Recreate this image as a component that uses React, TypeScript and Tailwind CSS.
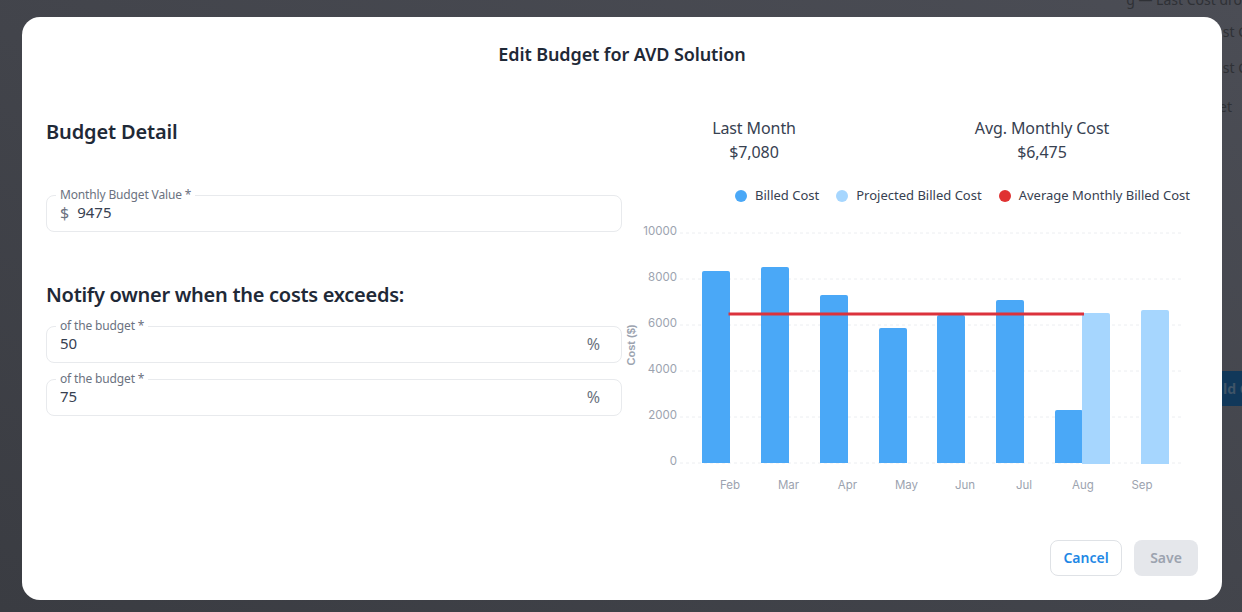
const font = "font-['Noto_Sans',sans-serif]"

const bars = [
  { x: 702, top: 271 },
  { x: 761, top: 267 },
  { x: 820, top: 295 },
  { x: 879, top: 328 },
  { x: 937, top: 315 },
  { x: 996, top: 300 },
  { x: 1055, top: 410 },
]

const projected = [
  { x: 1082, top: 313 },
  { x: 1141, top: 310 },
]

const ticks = [
  { label: "10000", y: 233 },
  { label: "8000", y: 279 },
  { label: "6000", y: 325 },
  { label: "4000", y: 371 },
  { label: "2000", y: 417 },
  { label: "0", y: 463 },
]

const months = [
  { label: "Feb", x: 730 },
  { label: "Mar", x: 788.5 },
  { label: "Apr", x: 847.5 },
  { label: "May", x: 906.5 },
  { label: "Jun", x: 965 },
  { label: "Jul", x: 1024 },
  { label: "Aug", x: 1083 },
  { label: "Sep", x: 1142 },
]

const legend = [
  { label: "Billed Cost", color: "bg-[#4aa8f7]" },
  { label: "Projected Billed Cost", color: "bg-[#a6d6fe]" },
  { label: "Average Monthly Billed Cost", color: "bg-[#e03131]" },
]

const barPath = (x: number, top: number, bottom: number, w = 28) =>
  `M${x} ${bottom}V${top + 2}Q${x} ${top} ${x + 2} ${top}H${x + w - 2}Q${x + w} ${top} ${x + w} ${top + 2}V${bottom}Z`

const Field = ({
  label,
  value,
  prefix,
  suffix,
}: {
  label: string
  value: string
  prefix?: string
  suffix?: string
}) => (
  <div className="relative flex h-[37px] items-center rounded-lg border border-[#e8eaed] px-[13px]">
    <span className="absolute -top-[9px] left-[9px] bg-white px-1 text-xs leading-4 tracking-[-0.15px] text-[#6b7280]">
      {label}
    </span>
    {prefix && <span className="mr-2 -mt-[2px] text-base text-[#6b7280]">{prefix}</span>}
    <span className="-mt-[2px] flex-1 text-[15px] text-[#374151]">{value}</span>
    {suffix && <span className="mr-2 -mt-[2px] text-base text-[#6b7280]">{suffix}</span>}
  </div>
)

const Chart = () => (
  <svg viewBox="622 222 576 278" className="mt-4 block h-[278px] w-[576px]">
    {ticks.map((t) => (
      <g key={t.label}>
        <line x1="680" x2="1182" y1={t.y} y2={t.y} stroke="#eceef1" strokeDasharray="3 3" />
        <text
          x="677"
          y={t.y + 2}
          textAnchor="end"
          fontSize="11.5"
          fontFamily="Inter, sans-serif"
          fill="#9ca3af"
        >
          {t.label}
        </text>
      </g>
    ))}
    <text
      transform="translate(635 345) rotate(-90)"
      textAnchor="middle"
      fontSize="11"
      fontWeight="700"
      fontFamily="'Liberation Sans', sans-serif"
      fill="#9ca3af"
    >
      Cost ($)
    </text>
    {bars.map((b) => (
      <path key={b.x} d={barPath(b.x, b.top, 463)} fill="#4aa8f7" />
    ))}
    {projected.map((b) => (
      <path key={b.x} d={barPath(b.x, b.top, 464)} fill="#a6d6fe" />
    ))}
    <line x1="728.5" x2="1084" y1="314" y2="314" stroke="#dc323c" strokeWidth="3" />
    {months.map((m) => (
      <text
        key={m.label}
        x={m.x}
        y="489"
        textAnchor="middle"
        fontSize="11.5"
        fontFamily="Inter, sans-serif"
        fill="#9ca3af"
      >
        {m.label}
      </text>
    ))}
  </svg>
)

export default function App() {
  return (
    <div className={`relative h-[612px] w-[1242px] overflow-hidden bg-linear-to-tr from-[#3a3c42] to-[#4b4d55] ${font}`}>
      {/* page behind the dialog */}
      <div className="absolute top-0 right-0 flex w-[130px] flex-col items-end text-sm leading-5 text-[#2f3136]">
        <div className="-mt-[10px] h-8 whitespace-nowrap">g — Last Cost dro</div>
        <div className="-mr-[5px] h-9">st C</div>
        <div className="-mr-[5px] h-[39px]">st C</div>
        <div className="pr-[10px]">et</div>
      </div>
      <div className="absolute top-[371px] right-0 flex h-[35px] w-5 items-center overflow-hidden bg-[#11385a] pl-px text-sm font-bold whitespace-nowrap text-[#3f5468]">
        ld C
      </div>

      <div className="absolute top-[17px] left-[22px] flex h-[583px] w-[1200px] flex-col rounded-[18px] bg-white px-6 pt-[23px] pb-6">
        <h1 className="text-center text-lg leading-7 font-semibold tracking-[-0.1px] text-[#1f2937]">
          Edit Budget for AVD Solution
        </h1>

        <div className="mt-[50px] grid grid-cols-2">
          <div className="flex flex-col">
            <h2 className="text-xl leading-7 font-semibold tracking-[-0.15px] text-[#1f2937]">Budget Detail</h2>
            <div className="mt-[49px]">
              <Field label="Monthly Budget Value *" value="9475" prefix="$" />
            </div>
            <h2 className="mt-[49px] text-xl leading-7 font-semibold tracking-[-0.28px] text-[#1f2937]">
              Notify owner when the costs exceeds:
            </h2>
            <div className="mt-[17px] flex flex-col gap-4">
              <Field label="of the budget *" value="50" suffix="%" />
              <Field label="of the budget *" value="75" suffix="%" />
            </div>
          </div>

          <div className="flex flex-col">
            <div className="-ml-3 grid w-[576px] grid-cols-2 text-center text-base leading-6 tracking-[-0.1px] text-[#374151]">
              <div>
                <div className="-mt-[2px]">Last Month</div>
                <div>$7,080</div>
              </div>
              <div>
                <div className="-mt-[2px]">Avg. Monthly Cost</div>
                <div>$6,475</div>
              </div>
            </div>
            <div className="mt-[22px] flex h-5 items-center justify-end gap-[17px] pr-2">
              {legend.map((l) => (
                <div key={l.label} className="flex items-center gap-2 text-[13px] text-[#374151]">
                  <span className={`size-3 rounded-full ${l.color}`} />
                  {l.label}
                </div>
              ))}
            </div>
            <Chart />
          </div>
        </div>

        <div className="mt-auto flex justify-end gap-3">
          <button
            type="button"
            className="h-9 w-[72px] rounded-lg border border-[#dfe2e6] bg-white text-sm font-semibold text-[#1e88e5]"
          >
            Cancel
          </button>
          <button
            type="button"
            className="h-9 w-16 rounded-lg bg-[#e5e7eb] text-sm font-semibold text-[#9ca3af]"
          >
            Save
          </button>
        </div>
      </div>
    </div>
  )
}
